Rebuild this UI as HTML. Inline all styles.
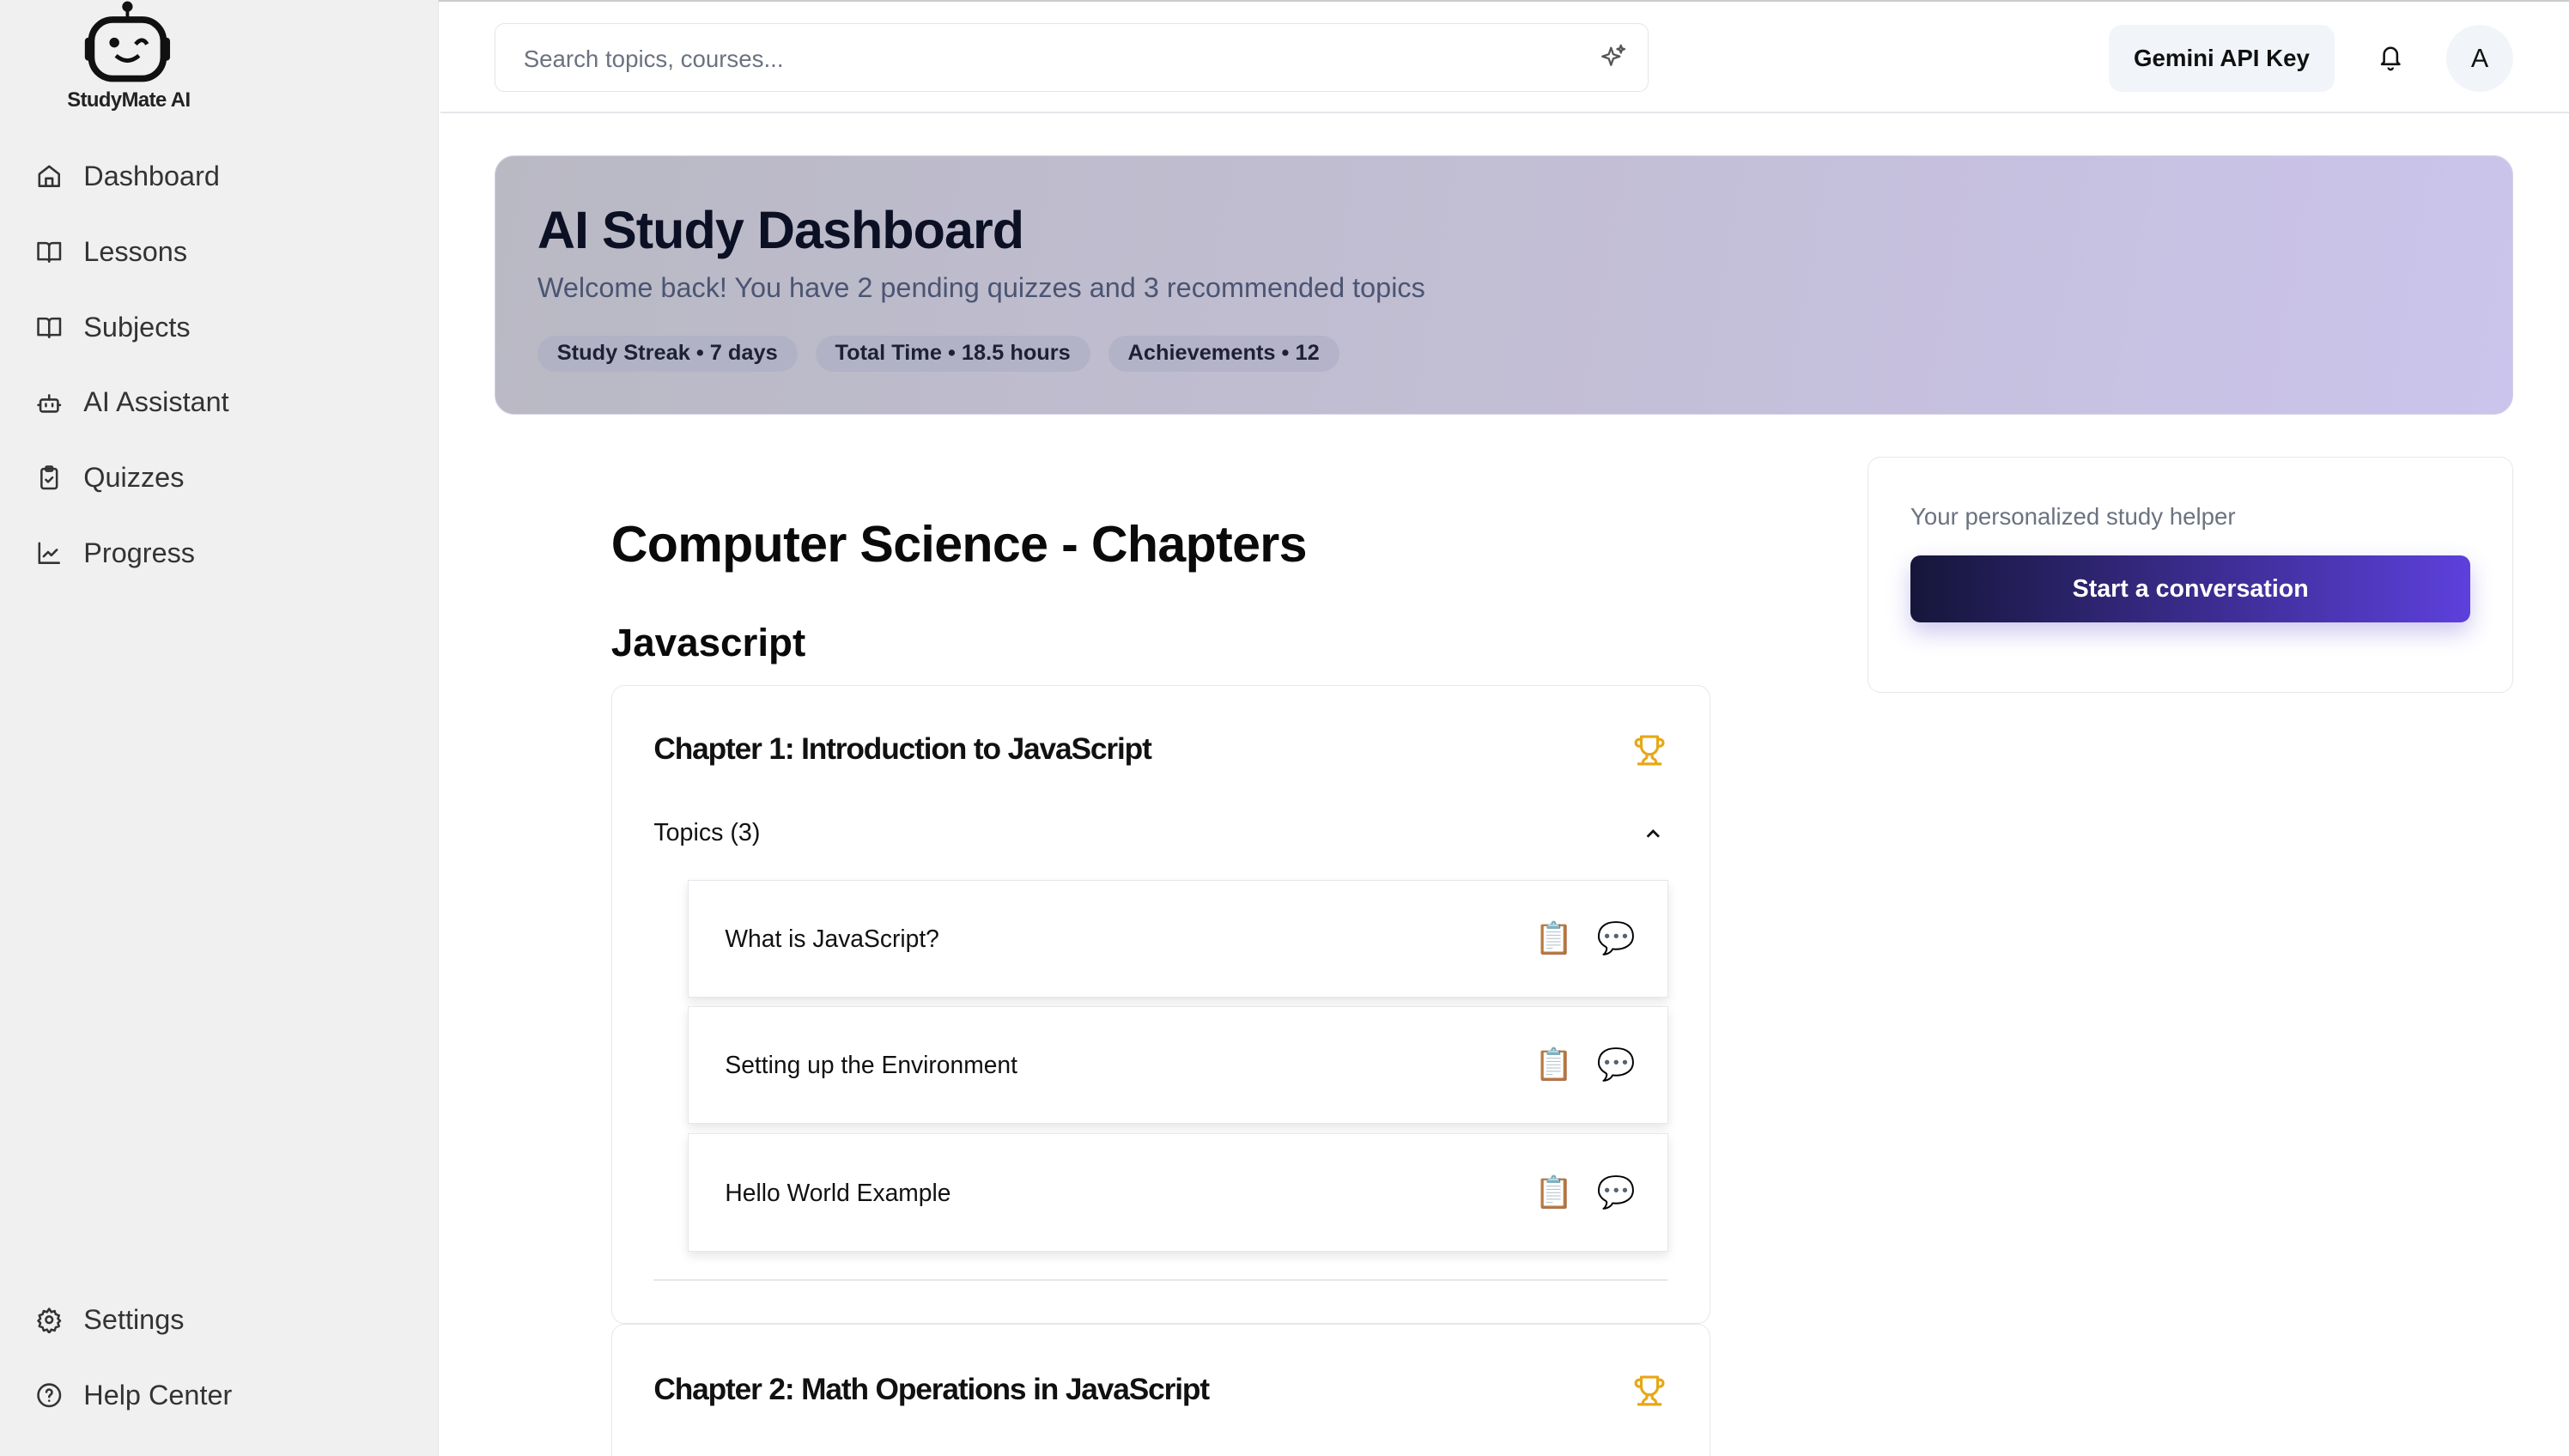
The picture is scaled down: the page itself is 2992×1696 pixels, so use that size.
<!DOCTYPE html>
<html><head><meta charset="utf-8"><style>
*{box-sizing:border-box;margin:0;padding:0}
html,body{width:2992px;height:1696px;overflow:hidden;background:#fff}
#r{zoom:1.90816;width:1568px;height:889px;position:relative;font-family:"Liberation Sans",sans-serif;color:#0f172a;overflow:hidden}
.a{position:absolute}
.sb{left:0;top:0;width:268px;height:889px;background:#f0f0f0;border-right:1px solid #e5e5e5}
.nav{position:absolute;left:22px;display:flex;align-items:center;font-size:17px;color:#333}
.nav svg{width:16px;height:16px;margin-right:13px;fill:none;stroke:#333;stroke-width:2;stroke-linecap:round;stroke-linejoin:round}
.pill{display:inline-block;background:rgba(170,172,195,.55);border-radius:11px;padding:0 12px;height:22px;line-height:22px;font-size:13.3px;font-weight:bold;color:#1e2033;margin-right:11px}
.topic{position:absolute;left:420px;width:598px;height:72px;background:#fff;border:1px solid #e5e7eb;box-shadow:0 3px 6px rgba(0,0,0,.1);font-size:14.8px;color:#111}
.topic span.t{position:absolute;left:22px;top:27px}
.topic .e{position:absolute;top:24px;font-size:19px;font-family:"Noto Color Emoji","DejaVu Sans",sans-serif}
</style></head><body><div id="r">
<div class="a" style="left:0;top:0;width:1568px;height:1px;background:#ccc"></div>
<div class="a sb"></div>
<svg class="a" style="left:50px;top:0" width="56" height="52" viewBox="0 0 56 52">
<circle cx="28" cy="4" r="3.2" fill="#111"/><rect x="27" y="4" width="2" height="8" fill="#111"/>
<rect x="6" y="12" width="44" height="36" rx="13" fill="none" stroke="#111" stroke-width="4"/>
<rect x="2" y="23" width="5" height="14" rx="2" fill="#111"/><rect x="49" y="23" width="5" height="14" rx="2" fill="#111"/>
<circle cx="20" cy="26" r="3" fill="#111"/><path d="M33 27 q4-5 7 0" stroke="#111" stroke-width="2.5" fill="none"/>
<path d="M21 34 q7 6 14 0" stroke="#111" stroke-width="2.5" fill="none"/></svg>
<div class="a" style="left:41px;top:54px;font-size:12.5px;font-weight:bold;color:#222;letter-spacing:-.3px">StudyMate AI</div>
<div class="nav" style="top:98px"><svg viewBox="0 0 24 24"><path d="M3 10l9-7 9 7v11H3z"/><path d="M9 21v-7h6v7"/></svg>Dashboard</div>
<div class="nav" style="top:144px"><svg viewBox="0 0 24 24"><path d="M2 4h7a3 3 0 013 3v14a2 2 0 00-2-2H2zM22 4h-7a3 3 0 00-3 3v14a2 2 0 012-2h8z"/></svg>Lessons</div>
<div class="nav" style="top:190px"><svg viewBox="0 0 24 24"><path d="M2 4h7a3 3 0 013 3v14a2 2 0 00-2-2H2zM22 4h-7a3 3 0 00-3 3v14a2 2 0 012-2h8z"/></svg>Subjects</div>
<div class="nav" style="top:236px"><svg viewBox="0 0 24 24"><rect x="4" y="9" width="16" height="11" rx="2"/><path d="M12 9V5M2 14h2M20 14h2M9 13v2M15 13v2"/></svg>AI Assistant</div>
<div class="nav" style="top:282px"><svg viewBox="0 0 24 24"><rect x="5" y="4" width="14" height="18" rx="2"/><rect x="9" y="2" width="6" height="4" rx="1"/><path d="M9 14l2 2 4-4"/></svg>Quizzes</div>
<div class="nav" style="top:328px"><svg viewBox="0 0 24 24"><path d="M3 3v18h18M7 15l4-4 3 3 5-5"/></svg>Progress</div>
<div class="nav" style="top:796px"><svg viewBox="0 0 24 24"><circle cx="12" cy="12" r="3"/><path d="M12 2l2 3 3-1 1 3 3 1-1 3 2 2-2 2 1 3-3 1-1 3-3-1-2 3-2-3-3 1-1-3-3-1 1-3-2-2 2-2-1-3 3-1 1-3 3 1z"/></svg>Settings</div>
<div class="nav" style="top:842px"><svg viewBox="0 0 24 24"><circle cx="12" cy="12" r="10"/><path d="M9.5 9a2.5 2.5 0 015 .5c0 2-2.5 2-2.5 4M12 17h.01"/></svg>Help Center</div>

<div class="a" style="left:269px;top:68px;width:1300px;height:1px;background:#e5e7eb"></div>
<div class="a" style="left:302px;top:14px;width:704px;height:42px;border:1px solid #e2e5ea;border-radius:6px;font-size:14.5px;color:#6b7280;padding:13px 17px">Search topics, courses...</div>
<svg class="a" style="left:976px;top:26px" width="18" height="18" viewBox="0 0 24 24" fill="none" stroke="#555" stroke-width="1.6" stroke-linejoin="round"><path d="M10 4l1.8 5.2L17 11l-5.2 1.8L10 18l-1.8-5.2L3 11l5.2-1.8z"/><path d="M18 2l.8 2.2L21 5l-2.2.8L18 8l-.8-2.2L15 5l2.2-.8z"/></svg>
<div class="a" style="left:1287px;top:15px;width:138px;height:41px;background:#f1f5f9;border-radius:8px;font-size:14.5px;font-weight:bold;text-align:center;line-height:41px;color:#111">Gemini API Key</div>
<svg class="a" style="left:1451px;top:26px" width="16" height="18" viewBox="0 0 24 26" fill="none" stroke="#111" stroke-width="2" stroke-linejoin="round"><path d="M6 17V10a6 6 0 0112 0v7l2 2H4z"/><path d="M10 22a2 2 0 004 0"/></svg>
<div class="a" style="left:1493px;top:15px;width:41px;height:41px;border-radius:50%;background:#f1f5f9;font-size:16px;text-align:center;line-height:41px;color:#111">A</div>

<div class="a" style="left:302px;top:95px;width:1232px;height:158px;border-radius:12px;border:1px solid #d5d2e4;background:linear-gradient(100deg,#b9b9c4 0%,#c2bed4 50%,#cbc4ec 100%)"></div>
<div class="a" style="left:328px;top:122px;font-size:32px;font-weight:bold;color:#0c1024;letter-spacing:-.5px">AI Study Dashboard</div>
<div class="a" style="left:328px;top:166px;font-size:17px;color:#4b5573">Welcome back! You have 2 pending quizzes and 3 recommended topics</div>
<div class="a" style="left:328px;top:205px;white-space:nowrap"><span class="pill">Study Streak • 7 days</span><span class="pill">Total Time • 18.5 hours</span><span class="pill">Achievements • 12</span></div>

<div class="a" style="left:1140px;top:279px;width:394px;height:144px;border:1px solid #e5e7eb;border-radius:8px"></div>
<div class="a" style="left:1166px;top:307px;font-size:14.5px;color:#6b7280">Your personalized study helper</div>
<div class="a" style="left:1166px;top:339px;width:342px;height:41px;border-radius:6px;background:linear-gradient(90deg,#16163a,#5d40dc);box-shadow:0 6px 14px rgba(90,70,200,.3);color:#fff;font-size:15px;font-weight:bold;text-align:center;line-height:41px">Start a conversation</div>

<div class="a" style="left:373px;top:314px;font-size:31px;font-weight:bold;color:#0a0a0a;letter-spacing:-.35px">Computer Science - Chapters</div>
<div class="a" style="left:373px;top:379px;font-size:24px;font-weight:bold;color:#0a0a0a">Javascript</div>

<div class="a" style="left:373px;top:418px;width:671px;height:390px;border:1px solid #e5e7eb;border-radius:8px"></div>
<div class="a" style="left:399px;top:447px;font-size:18.5px;font-weight:bold;color:#111;letter-spacing:-.6px">Chapter 1: Introduction to JavaScript</div>
<svg class="a" style="left:997px;top:447px" width="20" height="22" viewBox="0 0 24 24" fill="none" stroke="#e6a817" stroke-width="2" stroke-linecap="round" stroke-linejoin="round"><path d="M6 9H4.5a2.5 2.5 0 010-5H6M18 9h1.5a2.5 2.5 0 000-5H18M4 22h16M10 14.7V17c0 .6-.5 1-1 1.2-1.2.5-2 2-2 3.8M14 14.7V17c0 .6.5 1 1 1.2 1.2.5 2 2 2 3.8M18 2H6v7a6 6 0 0012 0z"/></svg>
<div class="a" style="left:399px;top:500px;font-size:15px;color:#111">Topics (3)</div>
<svg class="a" style="left:1002px;top:502px" width="14" height="14" viewBox="0 0 24 24" fill="none" stroke="#111" stroke-width="2.5"><path d="M6 15l6-6 6 6"/></svg>
<div class="topic" style="top:537px"><span class="t">What is JavaScript?</span><span class="e" style="left:516px">📋</span><span class="e" style="left:554px">💬</span></div>
<div class="topic" style="top:614px"><span class="t">Setting up the Environment</span><span class="e" style="left:516px">📋</span><span class="e" style="left:554px">💬</span></div>
<div class="topic" style="top:692px"><span class="t">Hello World Example</span><span class="e" style="left:516px">📋</span><span class="e" style="left:554px">💬</span></div>
<div class="a" style="left:399px;top:781px;width:619px;height:1px;background:#e5e7eb"></div>

<div class="a" style="left:373px;top:808px;width:671px;height:120px;border:1px solid #e5e7eb;border-radius:8px"></div>
<div class="a" style="left:399px;top:838px;font-size:18.5px;font-weight:bold;color:#111;letter-spacing:-.6px">Chapter 2: Math Operations in JavaScript</div>
<svg class="a" style="left:997px;top:838px" width="20" height="22" viewBox="0 0 24 24" fill="none" stroke="#e6a817" stroke-width="2" stroke-linecap="round" stroke-linejoin="round"><path d="M6 9H4.5a2.5 2.5 0 010-5H6M18 9h1.5a2.5 2.5 0 000-5H18M4 22h16M10 14.7V17c0 .6-.5 1-1 1.2-1.2.5-2 2-2 3.8M14 14.7V17c0 .6.5 1 1 1.2 1.2.5 2 2 2 3.8M18 2H6v7a6 6 0 0012 0z"/></svg>
</div></body></html>
